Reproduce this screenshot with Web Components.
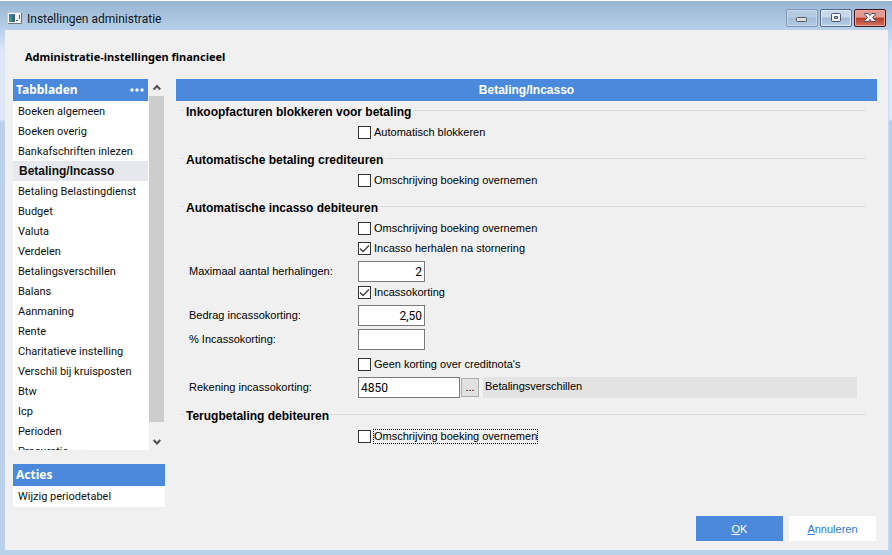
<!DOCTYPE html>
<html lang="nl">
<head>
<meta charset="utf-8">
<title>Instellingen administratie</title>
<style>
html, body { height: 100%; margin: 0; }
body { font: 11px/20px "Liberation Sans", Arial, sans-serif; color: #000; overflow: hidden; --blue: #4a89dc; }
</style>
</head>
<body>
<app-window caption="Instellingen administratie">
  <page-title>Administratie-instellingen financieel</page-title>
  <side-column slot="side">
    <tab-list></tab-list>
    <action-panel caption="Acties"><button-item>Wijzig periodetabel</button-item></action-panel>
  </side-column>
  <settings-panel caption="Betaling/Incasso">
    <form-section caption="Inkoopfacturen blokkeren voor betaling">
      <check-field label="Automatisch blokkeren"></check-field>
    </form-section>
    <form-section caption="Automatische betaling crediteuren">
      <check-field label="Omschrijving boeking overnemen"></check-field>
    </form-section>
    <form-section caption="Automatische incasso debiteuren">
      <check-field label="Omschrijving boeking overnemen"></check-field>
      <check-field label="Incasso herhalen na stornering" checked></check-field>
      <text-field label="Maximaal aantal herhalingen:" value="2"></text-field>
      <check-field label="Incassokorting" checked></check-field>
      <text-field label="Bedrag incassokorting:" value="2,50"></text-field>
      <text-field label="% Incassokorting:" value=""></text-field>
      <check-field label="Geen korting over creditnota's" class="loose"></check-field>
      <text-field label="Rekening incassokorting:" value="4850" lookup="Betalingsverschillen"></text-field>
    </form-section>
    <form-section caption="Terugbetaling debiteuren">
      <check-field label="Omschrijving boeking overnemen" marked></check-field>
    </form-section>
  </settings-panel>
  <dialog-button slot="footer" key="O" rest="K" primary></dialog-button>
  <dialog-button slot="footer" key="A" rest="nnuleren"></dialog-button>
</app-window>

<script>
class BaseElement extends HTMLElement {
  render(html) {
    const t = document.createElement('template');
    t.innerHTML = `<style>:host,*{box-sizing:border-box}button,input{font:inherit;color:inherit;margin:0}</style>` + html;
    this.attachShadow({ mode: 'open' }).append(t.content.cloneNode(true));
  }
  attr(name) { return (this.getAttribute(name) || '').replace(/"/g, '&quot;'); }
}

customElements.define('app-window', class extends BaseElement {
  connectedCallback() {
    this.render(`<style>
      :host { display: flex; flex-direction: column; height: 100vh; padding: 0 3px 5px 5px;
        border-top: 1px solid #fff;
        background: linear-gradient(#98b4d1 0, #b9d1ea 29px, #dce8f5 50px, #dce8f5 118px, #b9d1ea 121px); }
      header { flex: none; display: flex; align-items: center; height: 29px; padding: 0 3px 0 2px;
        font: 12px/20px Roboto, sans-serif; color: #101820; }
      header > svg { margin-right: 5px; margin-top: 4px }
      h1 { flex: 1; font: inherit; margin: 6px 0 0; }
      nav { display: flex; gap: 2px; margin-top: 5px; }
      nav button { width: 32px; height: 18px; padding: 0; border: 1px solid #566b88; border-radius: 2px; display: grid; place-items: center;
        box-shadow: inset 0 0 0 1px #dce8f5; background: linear-gradient(#c8d9ec 45%, #9fbad6 50%, #b7d0e8); }
      nav .min { border-color: #8298b4; box-shadow: inset 0 0 0 1px #c5d7ea; background: linear-gradient(#b4cae1 45%, #a2bcd8 50%, #b2cae3); }
      nav .close { border-color: #43141d; box-shadow: inset 0 0 0 1px #e6a79f; background: linear-gradient(#e59a8f 45%, #b53c26 50%, #d5705c); }
      main { flex: 1; min-height: 0; display: flex; flex-direction: column; background: #f0f0f0; border-right: 1px solid #c4dcf5; padding: 18px 11px 9px 8px; }
      .cols { flex: 1; min-height: 0; display: flex; gap: 11px; margin-top: 13px; align-items: flex-start; }
      ::slotted(settings-panel) { flex: 1; min-width: 0; }
      footer { display: flex; justify-content: flex-end; gap: 6px; padding-right: 1px; }
    </style>
    <header>
      <svg width="15" height="12" viewBox="0 0 15 12" aria-hidden="true"><path d="M.5.5h14v11H.5z" fill="#f4f6f8" stroke="#c5cdd6"/><path d="M1 11.5h13.5V1" fill="none" stroke="#6d7884"/><path d="M2 2h6v8H2z" fill="#3f7fb0"/><path d="M2 6h3v4H2z" fill="#3f9a62"/><path d="M5 3h3v7H5z" fill="#35677d"/><path d="M9 8h2v1H9zM12 3h1v4h-1z" fill="#4c5966"/></svg>
      <h1></h1>
      <nav>
        <button class="min" aria-label="Minimaliseren"><svg width="12" height="10"><rect x=".5" y="4.5" width="10" height="4" rx="1" fill="#ddd" stroke="#54575e"/></svg></button>
        <button aria-label="Maximaliseren"><svg width="12" height="10"><rect x="1.5" y=".5" width="9" height="8" rx="1" fill="#f3f3f3" stroke="#4e5570"/><path d="M4.500 3.500h3v2h-3z" fill="#9bb5d3" stroke="#4e5570"/></svg></button>
        <button class="close" aria-label="Sluiten"><svg width="12" height="10" viewBox="0 0 12 10"><path d="M.7.5h3.600L6 2.500 7.700.5h3.600v1L8.500 4.500l2.800 3v1H7.700L6 6.500 4.300 8.500H.7v-1l2.800-3-2.800-3z" fill="#f6f6f6" stroke="#4e4a66"/></svg></button>
      </nav>
    </header>
    <main>
      <slot name="title"></slot>
      <div class="cols"><slot name="side"></slot><slot></slot></div>
      <footer><slot name="footer"></slot></footer>
    </main>`);
    this.shadowRoot.querySelector('h1').textContent = this.getAttribute('caption');
    this.querySelector('page-title').slot = 'title';
  }
});

customElements.define('page-title', class extends BaseElement {
  connectedCallback() {
    this.render(`<style>:host{display:block;padding-left:12px}h2{margin:0;font:bold 11px/18px "Noto Sans",sans-serif}</style><h2><slot></slot></h2>`);
  }
});

customElements.define('side-column', class extends BaseElement {
  connectedCallback() {
    this.render(`<style>:host{flex:none;display:flex;flex-direction:column;gap:14px;width:152px;font-family:Roboto,sans-serif;color:#101010}</style><slot></slot>`);
  }
});

customElements.define('tab-list', class extends BaseElement {
  connectedCallback() {
    const items = ['Boeken algemeen', 'Boeken overig', 'Bankafschriften inlezen', 'Betaling/Incasso', 'Betaling Belastingdienst', 'Budget', 'Valuta', 'Verdelen', 'Betalingsverschillen', 'Balans', 'Aanmaning', 'Rente', 'Charitatieve instelling', 'Verschil bij kruisposten', 'Btw', 'Icp', 'Perioden', 'Procuratie'];
    this.render(`<style>
      :host { display: flex; height: 371px; }
      .list { flex: 1; overflow: hidden; background: linear-gradient(#fff, #fff) 0 22px no-repeat; }
      .head { display: flex; align-items: center; justify-content: space-between; height: 22px; padding: 0 4px 0 3px; background: var(--blue); color: #fff; font: bold 12px/22px "Noto Sans", sans-serif; margin-right: 1px; }
      .head button { display: flex; border: 0; padding: 0; background: none; }
      ul { list-style: none; margin: 0; padding: 0; }
      li button { display: block; width: 100%; height: 20px; border: 0; padding: 2px 0 0 5px; background: none; text-align: left; white-space: nowrap; line-height: 18px; }
      li button[aria-current] { background: #e6e8ed; font: bold 12px/20px "Liberation Sans", sans-serif; width: calc(100% - 1px); padding: 0 0 0 6px; }
      .bar { flex: none; display: flex; flex-direction: column; width: 16px; }
      .bar button { border: 0; padding: 0; background: none; height: 17px; display: grid; place-items: center; }
      .bar i { flex: 1; width: 15px; background: #cdcdcd; }
      .bar button:last-child { height: 28px; padding-top: 12px; }
    </style>
    <div class="list">
      <div class="head"><span>Tabbladen</span><button aria-label="Meer"><svg width="14" height="4" fill="#fff"><circle cx="2" cy="2" r="1.7"/><circle cx="7" cy="2" r="1.7"/><circle cx="12" cy="2" r="1.7"/></svg></button></div>
      <ul>${items.map(t => `<li><button${t === 'Betaling/Incasso' ? ' aria-current="page"' : ''}>${t}</button></li>`).join('')}</ul>
    </div>
    <div class="bar">
      <button aria-label="Omhoog"><svg width="8" height="7"><path d="M.7 5.500L4 2l3.300 3.500" fill="none" stroke="#505050" stroke-width="2"/></svg></button>
      <i></i>
      <button aria-label="Omlaag"><svg width="8" height="7"><path d="M.7 1L4 4.500 7.300 1" fill="none" stroke="#505050" stroke-width="2"/></svg></button>
    </div>`);
  }
});

customElements.define('action-panel', class extends BaseElement {
  connectedCallback() {
    this.render(`<style>
      :host { display: block; background: #fff; }
      h3 { margin: 0; padding-left: 3px; background: var(--blue); color: #fff; font: bold 12px/22px "Noto Sans", sans-serif; }
    </style><h3>${this.attr('caption')}</h3><slot></slot>`);
  }
});

customElements.define('button-item', class extends BaseElement {
  connectedCallback() {
    this.render(`<style>:host{display:block}button{display:block;width:100%;height:21px;border:0;padding:0 0 0 5px;background:none;text-align:left}</style><button><slot></slot></button>`);
  }
});

customElements.define('settings-panel', class extends BaseElement {
  connectedCallback() {
    this.render(`<style>
      :host { display: block; }
      h3 { margin: 0; background: var(--blue); color: #fff; text-align: center; font: bold 12px/22px "Liberation Sans", sans-serif; }
      div { padding: 1px 11px 0 5px; }
    </style><h3>${this.attr('caption')}</h3><div><slot></slot></div>`);
  }
});

customElements.define('form-section', class extends BaseElement {
  connectedCallback() {
    this.render(`<style>
      :host { display: block; padding-bottom: 8px; }
      h4 { display: flex; gap: 2px; margin: 0; font: bold 12px/20px "Liberation Sans", sans-serif; white-space: nowrap; }
      h4::before, h4::after { content: ""; border-top: 1px solid #dcdcdc; margin-top: 8px; width: 3px; }
      h4::after { flex: 1; }
      div { padding-left: 8px; }
    </style><h4><span>${this.attr('caption')}</span></h4><div><slot></slot></div>`);
  }
});

customElements.define('check-field', class extends BaseElement {
  connectedCallback() {
    this.render(`<style>
      :host { display: flex; height: 20px; padding-left: 169px; }
      :host(.loose) { padding-top: 4px; height: 24px; }
      label { display: flex; align-items: center; gap: 2px; height: 20px; }
      input { appearance: none; flex: none; width: 13px; height: 13px; border: 1px solid #333; background: #fff; }
      input:checked { background: #fff url('data:image/svg+xml,<svg xmlns="http://www.w3.org/2000/svg" width="11" height="11"><path d="M1 5.500l3 3 6-6" fill="none" stroke="%23404040" stroke-width="1.400"/></svg>'); }
      span { line-height: 13px; padding: 0 1px; border: 1px solid transparent; border-left-width: 0; }
      :host([marked]) span { border: 1px dotted #000; padding: 0; }
    </style><label><input type="checkbox"${this.hasAttribute('checked') ? ' checked' : ''}><span>${this.attr('label')}</span></label>`);
  }
});

customElements.define('text-field', class extends BaseElement {
  connectedCallback() {
    const lookup = this.getAttribute('lookup');
    this.render(`<style>
      :host { display: flex; align-items: flex-start; height: 24px; padding-top: 3px; }
      label { flex: none; width: 169px; line-height: 20px; }
      input { flex: none; width: 67px; height: 21px; border: 1px solid #7a7a7a; background: #fff; padding: 0 2px; text-align: right; font: 12px/19px Roboto, sans-serif; }
      input.wide { width: 102px; text-align: left; }
      button { flex: none; width: 18px; height: 19px; margin: 1px 4px 0 1px; padding: 0; border: 1px solid #adadad; background: #e1e1e1; line-height: 17px; }
      output { flex: 1; margin-right: 9px; height: 21px; padding-left: 2px; background: #e3e3e3; line-height: 19px; }
    </style>
    <label for="f">${this.attr('label')}</label><input id="f" type="text" value="${this.attr('value')}"${lookup ? ' class="wide"' : ''}>
    ${lookup ? `<button aria-label="Zoeken">...</button><output for="f">${lookup}</output>` : ''}`);
  }
});

customElements.define('dialog-button', class extends BaseElement {
  connectedCallback() {
    this.render(`<style>
      :host { display: block; }
      button { width: 87px; height: 25px; border: 0; padding: 0; background: #fff; color: #2f78d6; font-size: 11px; }
      :host([primary]) button { background: var(--blue); color: #fff; }
    </style><button><u>${this.attr('key')}</u>${this.attr('rest')}</button>`);
  }
});
</script>
</body>
</html>
